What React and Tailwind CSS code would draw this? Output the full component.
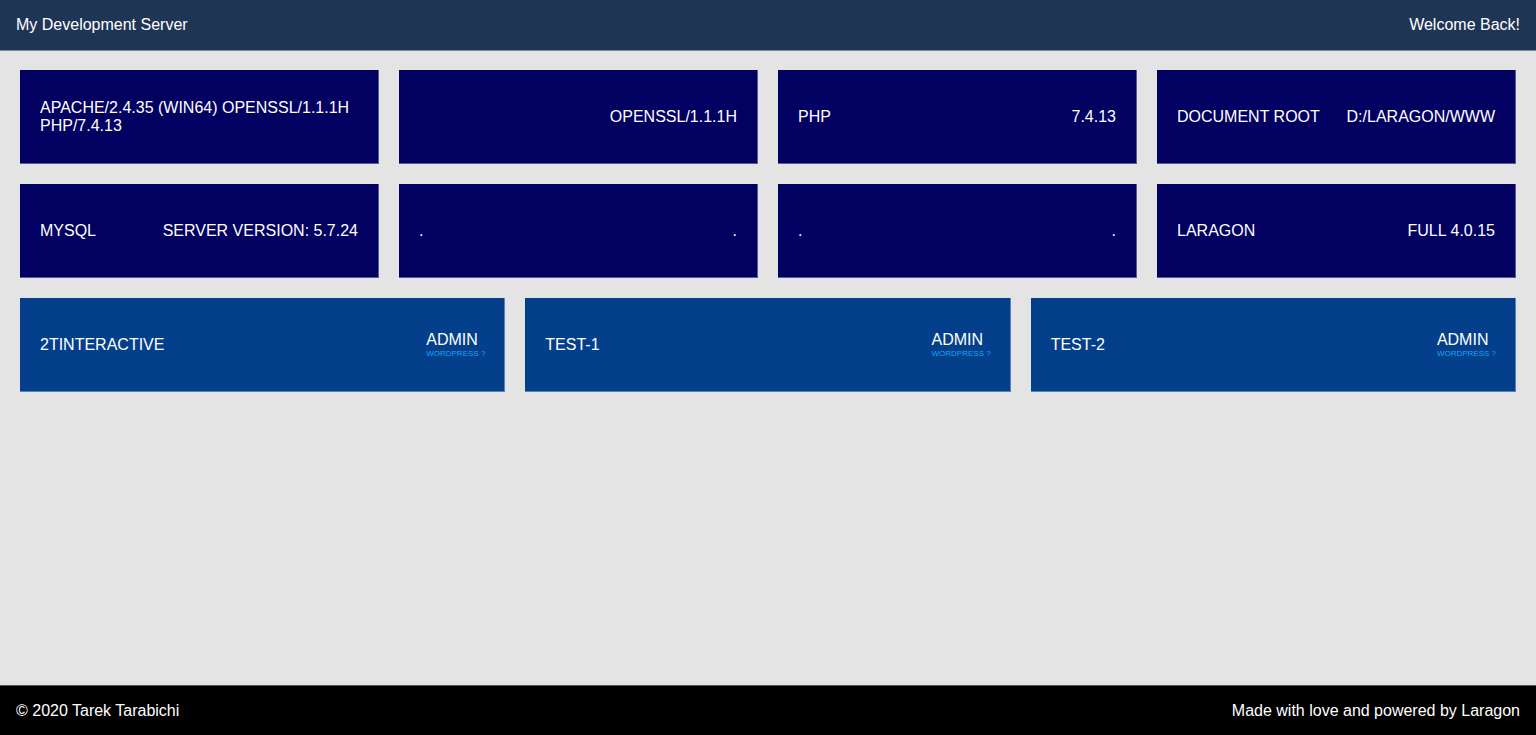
export default function App() {
  const row1 = [
    { l: "APACHE/2.4.35 (WIN64) OPENSSL/1.1.1H PHP/7.4.13", r: "" },
    { l: "", r: "OPENSSL/1.1.1H" },
    { l: "PHP", r: "7.4.13" },
    { l: "DOCUMENT ROOT", r: "D:/LARAGON/WWW" },
  ];
  const row2 = [
    { l: "MYSQL", r: "SERVER VERSION: 5.7.24" },
    { l: ".", r: "." },
    { l: ".", r: "." },
    { l: "LARAGON", r: "FULL 4.0.15" },
  ];
  const sites = ["2TINTERACTIVE", "TEST-1", "TEST-2"];
  return (
    <div className="flex h-[735px] flex-col bg-[#e4e4e4] text-white" style={{ fontFamily: '"Liberation Sans", Arial, sans-serif' }}>
      <header className="flex h-[51px] shrink-0 items-center justify-between border-b border-[#7d8a9b] bg-[#1f3556] px-4 text-base">
        <span>My Development Server</span>
        <span>Welcome Back!</span>
      </header>
      <main className="flex flex-1 flex-col gap-[20px] px-5 pt-[19px]">
        <div className="grid grid-cols-4 gap-5">
          {row1.map((c, i) => (
            <div key={i} className="flex h-[94px] items-center justify-between border-b border-r border-[#5a5a96] bg-[#020060] px-5 text-base leading-[18px]">
              <span className={i === 0 ? "" : "whitespace-nowrap"}>{c.l}</span>
              <span className="whitespace-nowrap">{c.r}</span>
            </div>
          ))}
        </div>
        <div className="grid grid-cols-4 gap-5">
          {row2.map((c, i) => (
            <div key={i} className="flex h-[94px] items-center justify-between border-b border-r border-[#5a5a96] bg-[#020060] px-5 text-base leading-[18px]">
              <span className="whitespace-nowrap">{c.l}</span>
              <span className="whitespace-nowrap">{c.r}</span>
            </div>
          ))}
        </div>
        <div className="grid grid-cols-3 gap-5">
          {sites.map((s) => (
            <div key={s} className="flex h-[94px] items-center justify-between border-b border-r border-[#5a82b4] bg-[#033f8a] pl-5 pr-[19px] text-base leading-[18px]">
              <span>{s}</span>
              <div className="flex flex-col">
                <span>ADMIN</span>
                <span className="text-[8px] leading-[9px] text-[#14a6f7]">WORDPRESS ?</span>
              </div>
            </div>
          ))}
        </div>
      </main>
      <footer className="flex h-[50px] shrink-0 items-center justify-between border-t border-[#555] bg-black px-4 text-base">
        <span>© 2020 Tarek Tarabichi</span>
        <span>Made with love and powered by Laragon</span>
      </footer>
    </div>
  );
}
